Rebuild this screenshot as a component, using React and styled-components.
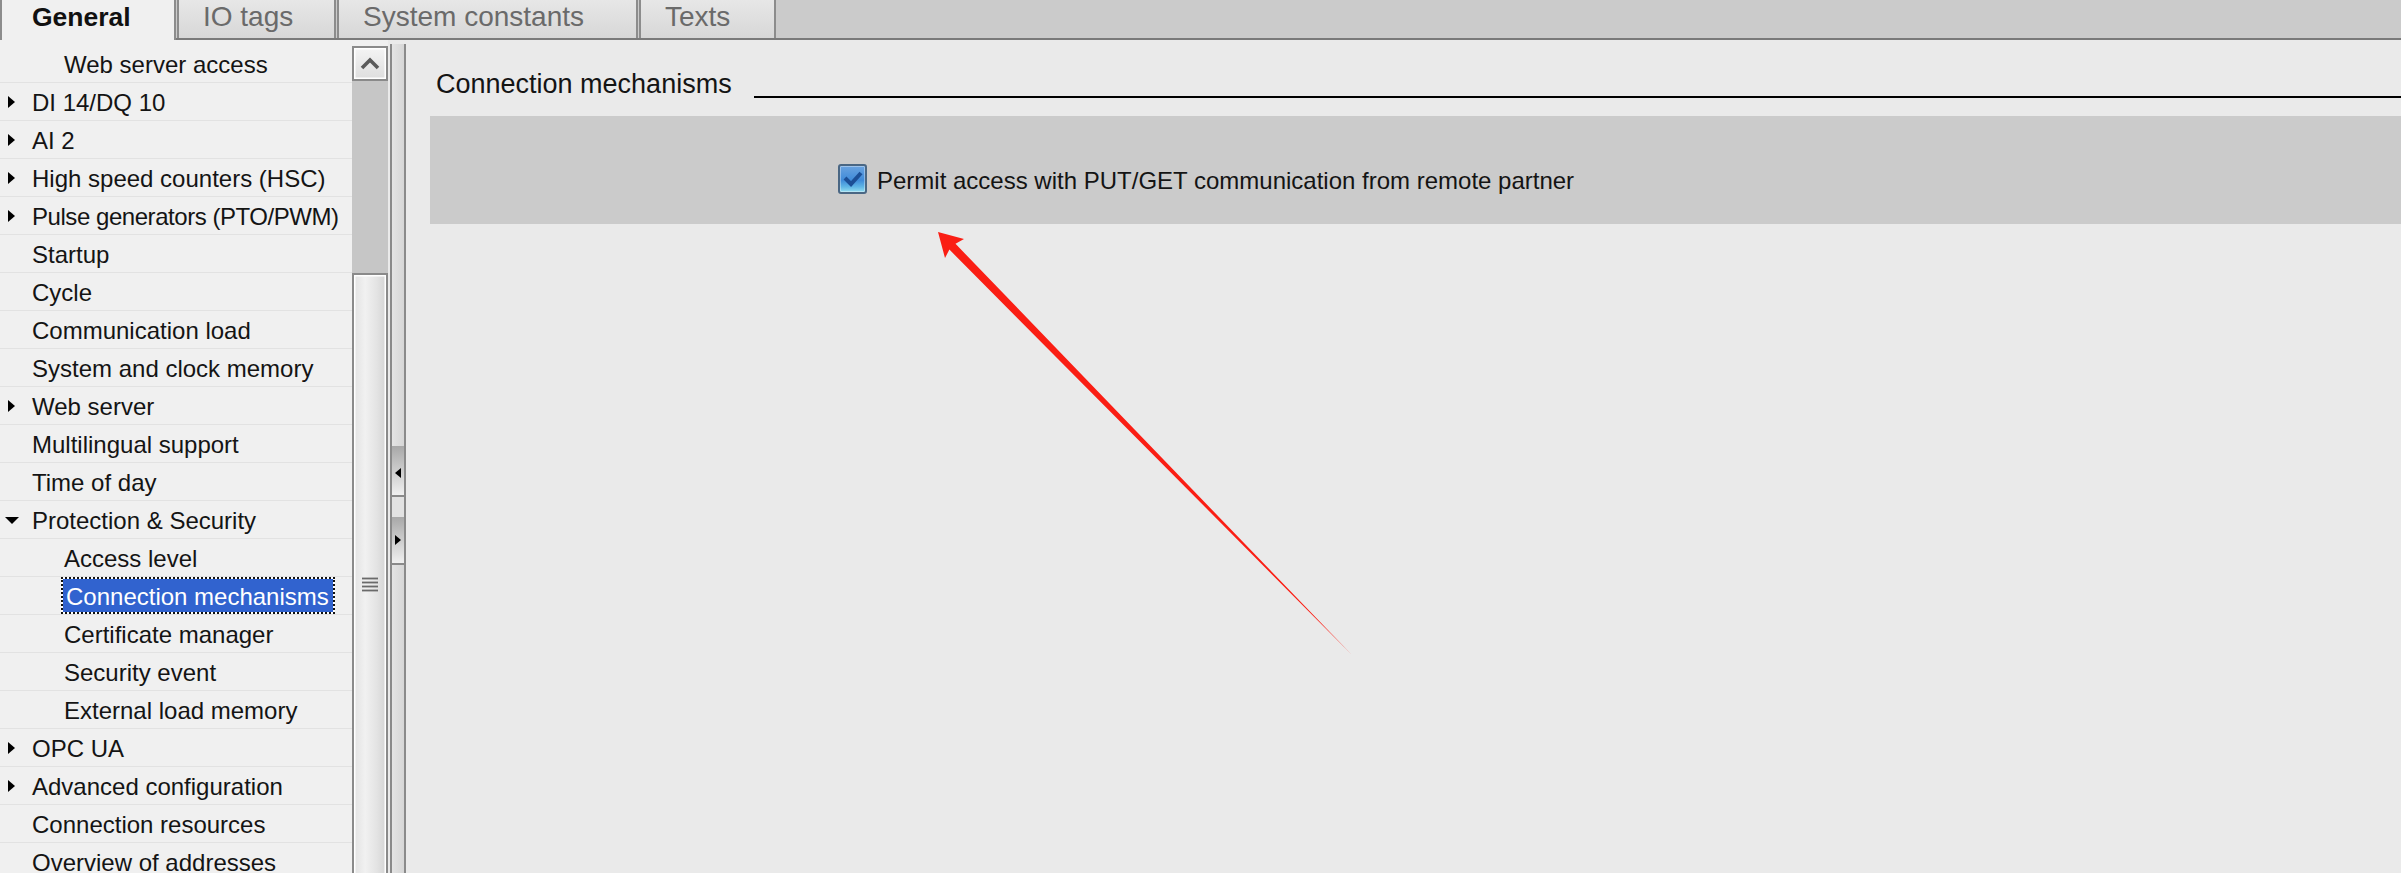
import React from "react";
import styled, { createGlobalStyle, css } from "styled-components";

const Global = createGlobalStyle`
  html, body { margin: 0; padding: 0; background: #eaeaea; }
  body { font-family: "Liberation Sans", Arial, sans-serif; overflow: hidden; }
`;

const Root = styled.div`
  position: relative;
  width: 2401px;
  height: 873px;
  overflow: hidden;
  display: flex;
  flex-direction: column;
  background: #eaeaea;
  font-family: "Liberation Sans", Arial, sans-serif;
`;

const TabBar = styled.div`
  display: flex;
  align-items: flex-start;
  gap: 1px;
  height: 40px;
  box-sizing: border-box;
  border-bottom: 2px solid #7a7a7a;
  background: #cbcbcb;
  flex-shrink: 0;
`;

const Tab = styled.div`
  box-sizing: border-box;
  width: ${(p) => p.$w}px;
  height: 38px;
  padding-left: 24px;
  padding-bottom: 4px;
  display: flex;
  align-items: center;
  border-left: 2px solid #8c8c8c;
  border-right: 2px solid #8c8c8c;
  background: linear-gradient(#e7e7e7, #d7d7d7);
  color: #6a6a6a;
  font-size: 28px;
  white-space: nowrap;
  ${(p) =>
    p.$active &&
    css`
      position: relative;
      z-index: 1;
      height: 40px;
      padding-left: 30px;
      padding-bottom: 6px;
      background: #f0f0f0;
      color: #111;
      font-weight: bold;
      font-size: 26.5px;
    `}
`;

const Body = styled.div`
  flex: 1;
  min-height: 0;
  display: flex;
`;

const TreePanel = styled.div`
  width: 352px;
  flex-shrink: 0;
  box-sizing: border-box;
  padding-top: 5px;
  background: #f0f0f0;
  overflow: hidden;
`;

const TreeRow = styled.div`
  height: 38px;
  box-sizing: border-box;
  border-bottom: 1px solid #e2e2e2;
  display: flex;
  align-items: center;
`;

const Indent = styled.div`
  width: ${(p) => p.$w}px;
  flex-shrink: 0;
  box-sizing: border-box;
  padding-left: ${(p) => (p.$open ? 5 : 8)}px;
  display: flex;
  align-items: center;
`;

const TriRight = styled.span`
  width: 0;
  height: 0;
  border-top: 6.5px solid transparent;
  border-bottom: 6.5px solid transparent;
  border-left: 7px solid #000;
`;

const TriDown = styled.span`
  width: 0;
  height: 0;
  margin-top: 2px;
  border-left: 7.5px solid transparent;
  border-right: 7.5px solid transparent;
  border-top: 7px solid #000;
`;

const Label = styled.span`
  font-size: 24px;
  color: #141414;
  white-space: nowrap;
  line-height: 1;
  margin-top: 2px;
  letter-spacing: ${(p) => (p.$tight ? "-0.45px" : "0")};
  ${(p) =>
    p.$selected &&
    css`
      align-self: stretch;
      display: flex;
      align-items: center;
      box-sizing: border-box;
      margin-top: 0;
      margin-left: -3px;
      padding: 2px 4px 0 3px;
      color: #fff;
      border: 2px dotted #111;
      background: linear-gradient(#3163cf, #3163cf) padding-box, #ffffff border-box;
    `}
`;

const ScrollCol = styled.div`
  width: 36px;
  flex-shrink: 0;
  box-sizing: border-box;
  padding-top: 6px;
  display: flex;
  flex-direction: column;
  background: #f0f0f0;
`;

const UpBtn = styled.div`
  height: 35px;
  box-sizing: border-box;
  border: 2px solid #8a8a8a;
  box-shadow: inset 0 0 0 1.5px #fff;
  background: linear-gradient(#f4f4f4, #dedede);
  display: flex;
  align-items: center;
  justify-content: center;
`;

const Track = styled.div`
  height: 192px;
  background: #c6c6c6;
`;

const Thumb = styled.div`
  flex: 1;
  box-sizing: border-box;
  border: 2px solid #8a8a8a;
  border-bottom: none;
  box-shadow: inset 1.5px 1.5px 0 #fff, inset -1.5px 0 0 #fff;
  background: linear-gradient(to right, #e2e2e2, #f1f1f1 35%, #e4e4e4 70%, #d4d4d4);
  display: flex;
  flex-direction: column;
  align-items: center;
  padding-top: 302px;
`;

const Splitter = styled.div`
  width: 16px;
  flex-shrink: 0;
  box-sizing: border-box;
  margin-left: 2px;
  margin-top: 4px;
  border-left: 2px solid #8a8a8a;
  border-right: 2px solid #8a8a8a;
  background: linear-gradient(to right, #e4e4e4, #d6d6d6);
  display: flex;
  flex-direction: column;
  padding-top: 402px;
`;

const SplitBtn = styled.div`
  height: ${(p) => p.$h}px;
  box-sizing: border-box;
  border-bottom: 2px solid #8a8a8a;
  background: ${(p) =>
    p.$lead
      ? `linear-gradient(#e2e2e2 0 ${p.$lead}px, #a8a8a8 ${p.$lead}px, #f0f0f0 100%)`
      : "linear-gradient(#a8a8a8, #f0f0f0)"};
  display: flex;
  align-items: flex-start;
  padding-top: ${(p) => p.$tri}px;
  padding-left: 3px;
`;

const TriLeft = styled.span`
  width: 0;
  height: 0;
  border-top: 5px solid transparent;
  border-bottom: 5px solid transparent;
  border-right: 6px solid #000;
`;

const TriRightSmall = styled.span`
  width: 0;
  height: 0;
  border-top: 5px solid transparent;
  border-bottom: 5px solid transparent;
  border-left: 6px solid #000;
`;

const Content = styled.div`
  flex: 1;
  min-width: 0;
  box-sizing: border-box;
  padding-left: 24px;
  display: flex;
  flex-direction: column;
`;

const Header = styled.div`
  height: 44px;
  margin-top: 22px;
  padding-left: 6px;
  display: flex;
  align-items: flex-start;
`;

const HeaderText = styled.span`
  font-size: 27px;
  line-height: 44px;
  color: #141414;
  white-space: nowrap;
`;

const HeaderRule = styled.span`
  flex: 1;
  height: 2px;
  margin-top: 34px;
  margin-left: 22px;
  background: #000;
`;

const GrayBox = styled.div`
  margin-top: 10px;
  height: 108px;
  box-sizing: border-box;
  background: #cbcbcb;
  padding-left: 408px;
  padding-top: 48px;
`;

const CheckRow = styled.div`
  display: flex;
  align-items: center;
  gap: 10px;
  height: 30px;
`;

const CheckBox = styled.div`
  width: 29px;
  height: 30px;
  box-sizing: border-box;
  border: 2px solid #4a6784;
  border-radius: 3px;
  background: linear-gradient(#6aa3e0, #3f8bd9 55%, #5fb6e6 80%, #93dcef);
  box-shadow: inset 0 0 0 1px rgba(255, 255, 255, 0.35);
  display: flex;
  align-items: center;
  justify-content: center;
`;

const CheckLabel = styled.span`
  font-size: 24px;
  color: #141414;
  white-space: nowrap;
  margin-top: 4px;
`;

const Overlay = styled.svg`
  position: absolute;
  left: 0;
  top: 0;
  width: 2401px;
  height: 873px;
  pointer-events: none;
`;

const rows = [
  { t: "Web server access", l: 2 },
  { t: "DI 14/DQ 10", l: 1, tw: "r" },
  { t: "AI 2", l: 1, tw: "r" },
  { t: "High speed counters (HSC)", l: 1, tw: "r" },
  { t: "Pulse generators (PTO/PWM)", l: 1, tw: "r", tight: true },
  { t: "Startup", l: 1 },
  { t: "Cycle", l: 1 },
  { t: "Communication load", l: 1 },
  { t: "System and clock memory", l: 1 },
  { t: "Web server", l: 1, tw: "r" },
  { t: "Multilingual support", l: 1 },
  { t: "Time of day", l: 1 },
  { t: "Protection & Security", l: 1, tw: "d" },
  { t: "Access level", l: 2 },
  { t: "Connection mechanisms", l: 2, sel: true },
  { t: "Certificate manager", l: 2 },
  { t: "Security event", l: 2 },
  { t: "External load memory", l: 2 },
  { t: "OPC UA", l: 1, tw: "r" },
  { t: "Advanced configuration", l: 1, tw: "r" },
  { t: "Connection resources", l: 1 },
  { t: "Overview of addresses", l: 1 },
];

const tabs = [
  { t: "General", w: 176, active: true },
  { t: "IO tags", w: 159 },
  { t: "System constants", w: 301 },
  { t: "Texts", w: 137 },
];

export default function App() {
  return (
    <>
      <Global />
      <Root>
        <TabBar>
          {tabs.map((tb) => (
            <Tab key={tb.t} $w={tb.w} $active={tb.active}>
              {tb.t}
            </Tab>
          ))}
        </TabBar>
        <Body>
          <TreePanel>
            {rows.map((r) => (
              <TreeRow key={r.t}>
                <Indent $w={r.l === 2 ? 64 : 32} $open={r.tw === "d"}>
                  {r.tw === "r" && <TriRight />}
                  {r.tw === "d" && <TriDown />}
                </Indent>
                <Label $selected={r.sel} $tight={r.tight}>
                  {r.t}
                </Label>
              </TreeRow>
            ))}
          </TreePanel>
          <ScrollCol>
            <UpBtn>
              <svg width="22" height="13" viewBox="0 0 22 13">
                <polyline points="3,11 11,3 19,11" fill="none" stroke="#5a5a5a" strokeWidth="3.6" />
              </svg>
            </UpBtn>
            <Track />
            <Thumb>
              <svg width="16" height="16" viewBox="0 0 16 16">
                {[1.5, 5.5, 9.5, 13.5].map((y) => (
                  <rect key={y} x="0" y={y - 0.9} width="16" height="1.8" fill="#6a6a6a" />
                ))}
              </svg>
            </Thumb>
          </ScrollCol>
          <Splitter>
            <SplitBtn $h={51} $tri={22}>
              <TriLeft />
            </SplitBtn>
            <SplitBtn $h={68} $lead={20} $tri={38}>
              <TriRightSmall />
            </SplitBtn>
          </Splitter>
          <Content>
            <Header>
              <HeaderText>Connection mechanisms</HeaderText>
              <HeaderRule />
            </Header>
            <GrayBox>
              <CheckRow>
                <CheckBox>
                  <svg width="22" height="20" viewBox="0 0 22 20">
                    <polyline points="3,9 9,15 19,4" fill="none" stroke="#1c4f96" strokeWidth="4" strokeLinejoin="miter" />
                  </svg>
                </CheckBox>
                <CheckLabel>Permit access with PUT/GET communication from remote partner</CheckLabel>
              </CheckRow>
            </GrayBox>
          </Content>
        </Body>
        <Overlay viewBox="0 0 2401 873">
          <polygon
            points="938,232 964,239 955.5,243.8 1352,655 949.4,249.6 945,258"
            fill="#fa1e14"
          />
        </Overlay>
      </Root>
    </>
  );
}
